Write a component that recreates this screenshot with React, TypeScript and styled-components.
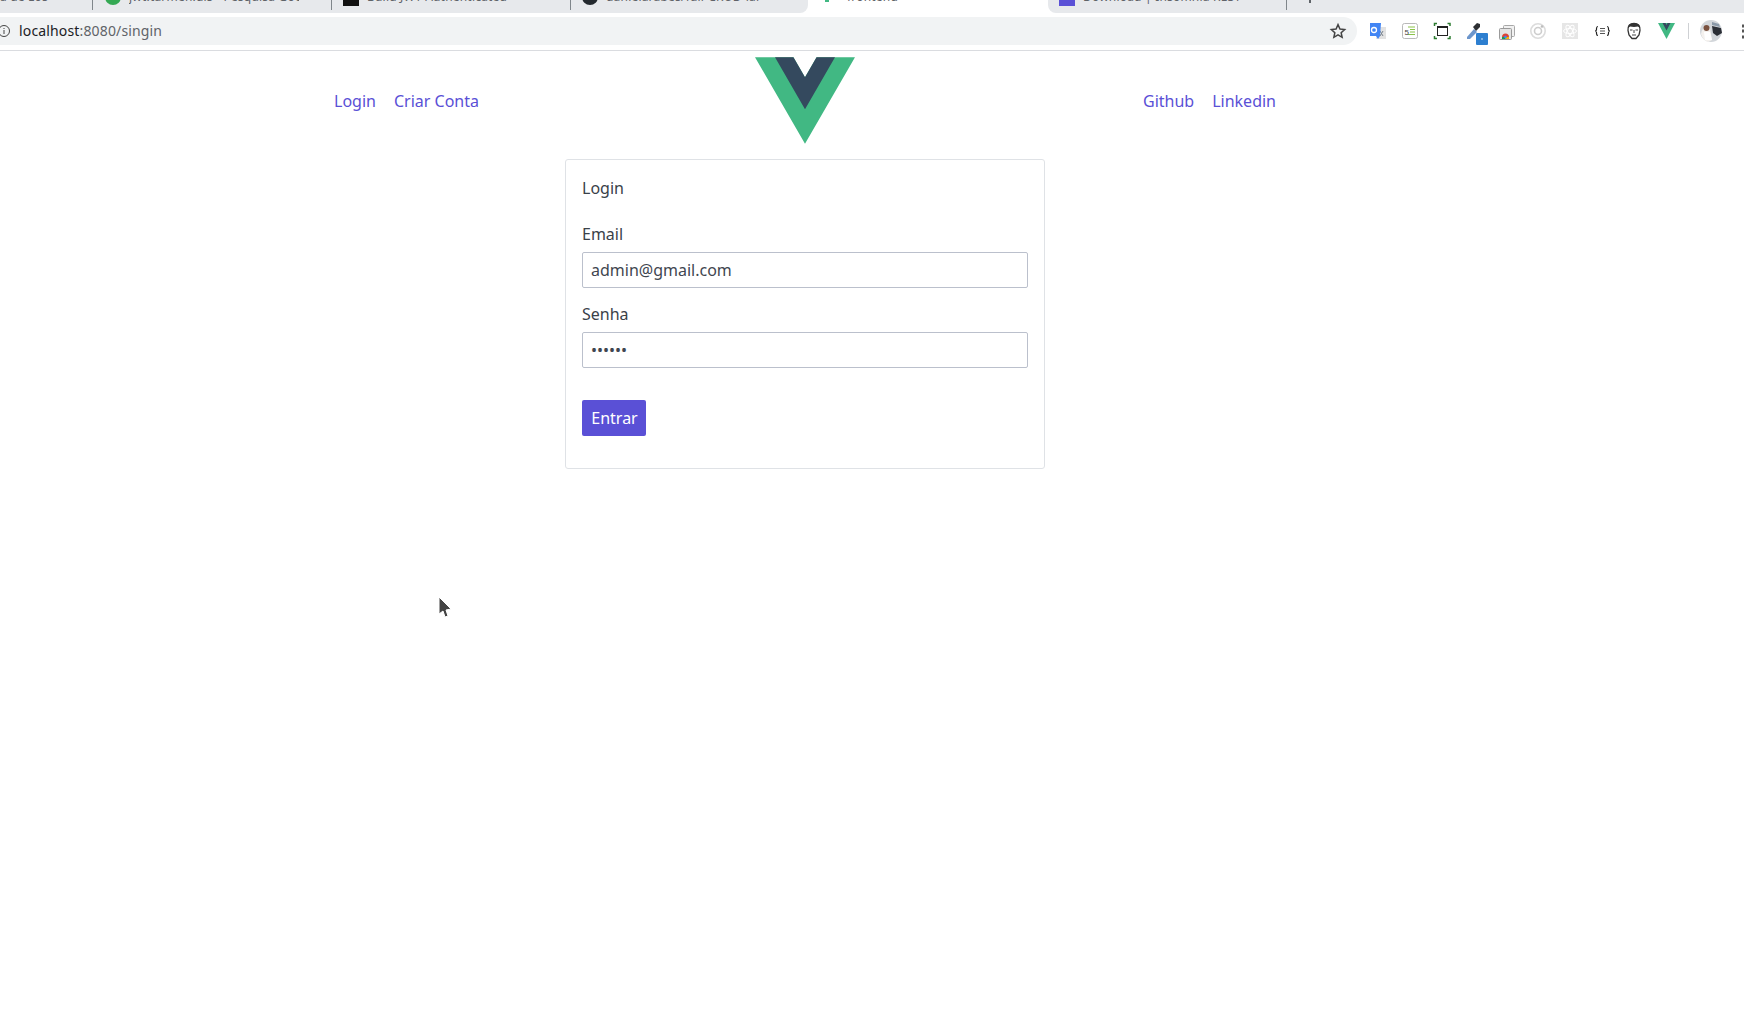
import styled, { createGlobalStyle } from "styled-components";

const Global = createGlobalStyle`
  html, body {
    margin: 0;
    padding: 0;
    background: #fff;
  }
  * {
    box-sizing: border-box;
  }
  body {
    font-family: "Noto Sans", sans-serif;
    font-size: 16px;
    line-height: 24px;
    color: #3a4149;
  }
`

const Page = styled.div`
  width: 1744px;
  height: 1028px;
  overflow: hidden;
  position: relative;
`

const TabStrip = styled.div`
  height: 13px;
  background: #fff;
  display: flex;
  overflow: hidden;
`

const Tab = styled.div<{ $w: number; $active?: boolean; $pad?: number; $round?: "l" | "r" }>`
  width: ${(p) => p.$w}px;
  height: 13px;
  flex: none;
  display: flex;
  align-items: flex-start;
  gap: 8px;
  padding-left: ${(p) => p.$pad ?? 11}px;
  font-size: 12px;
  line-height: 14px;
  white-space: nowrap;
  overflow: hidden;
  color: #5f6368;
  background: ${(p) => (p.$active ? "#fff" : "#e7e9ec")};
  border-bottom-left-radius: ${(p) => (p.$round === "l" ? 8 : 0)}px;
  border-bottom-right-radius: ${(p) => (p.$round === "r" ? 8 : 0)}px;
`

const TabRest = styled(Tab)`
  flex: 1;
  padding-left: 22px;
`

const TabIcon = styled.span<{ $c: string; $round?: boolean }>`
  width: 16px;
  height: 16px;
  margin-top: ${(p) => (p.$round ? -11 : -10)}px;
  flex: none;
  background: ${(p) => p.$c};
  border-radius: ${(p) => (p.$round ? "50%" : "0")};
`

const TabMark = styled.span`
  width: 4px;
  height: 2px;
  flex: none;
  margin-left: 4px;
  margin-right: 10px;
  background: #41b883;
`

const TabText = styled.span`
  margin-top: -10px;
  letter-spacing: 0.2px;
  overflow: hidden;
  max-width: 170px;
`

const TabSep = styled.span`
  width: 1px;
  height: 10px;
  flex: none;
  margin-left: auto;
  background: #80868b;
`

const PlusMark = styled.span`
  width: 2px;
  height: 3px;
  background: #5f6368;
`

const Toolbar = styled.div`
  height: 38px;
  background: #fff;
  border-bottom: 1px solid #dadce0;
  display: flex;
  align-items: flex-start;
  padding-top: 4px;
`

const UrlBar = styled.div`
  width: 1357px;
  height: 28px;
  background: #f1f3f4;
  border-radius: 0 14px 14px 0;
  display: flex;
  align-items: center;
  padding-right: 10px;
  font-size: 14px;
  letter-spacing: 0.15px;
  color: #202124;
`

const InfoIcon = styled.svg`
  width: 14px;
  height: 14px;
  margin-left: -3px;
  margin-right: 8px;
  flex: none;
`

const UrlRest = styled.span`
  color: #5f6368;
`

const Star = styled.svg`
  margin-left: auto;
  width: 18px;
  height: 18px;
`

const Extensions = styled.div`
  display: flex;
  align-items: center;
  height: 28px;
`

const Nav = styled.div`
  width: 1610px;
  height: 94px;
  display: flex;
  align-items: flex-start;
  justify-content: center;
  padding-top: 6px;
`

const NavGroup = styled.div`
  width: 437px;
  height: 87px;
  display: flex;
  align-items: center;
  gap: 18px;
  padding-left: 16px;
`

const NavGroupRight = styled(NavGroup)`
  justify-content: flex-end;
  padding-left: 0;
  padding-right: 16px;
`

const NavLink = styled.a`
  color: #5a50d6;
  text-decoration: none;
`

const Logo = styled.svg`
  width: 100px;
  height: 87px;
  flex: none;
`

const Main = styled.div`
  width: 1610px;
  display: flex;
  justify-content: center;
  padding-top: 14px;
`

const Card = styled.form`
  width: 480px;
  height: 310px;
  border: 1px solid #dfe2e6;
  border-radius: 3px;
  padding: 16px;
`

const CardTitle = styled.div`
  height: 24px;
  margin-bottom: 22px;
`

const Label = styled.label`
  display: block;
  margin-bottom: 6px;
  height: 24px;
`

const Input = styled.input`
  display: block;
  width: 100%;
  height: 36px;
  border: 1px solid #bbc0cc;
  border-radius: 2px;
  padding: 0 8px;
  margin-bottom: 14px;
  font-family: "Noto Sans", sans-serif;
  font-size: 16px;
  color: #3f4650;
  outline: none;
`

const Submit = styled.button`
  display: block;
  margin-top: 32px;
  width: 64px;
  height: 36px;
  border: none;
  border-radius: 2px;
  background: #5a50d6;
  color: #fff;
  font-family: "Noto Sans", sans-serif;
  font-size: 16px;
  padding: 0 0 0 1px;
`

const Cursor = styled.svg`
  position: absolute;
  left: 438px;
  top: 596px;
  width: 14px;
  height: 22px;
`

function ExtIcons() {
  return (
    <Extensions>
      <svg width="387" height="28" viewBox="0 0 387 28">
        {/* translate */}
        <path d="M21 10h8v12h-10z" fill="#e2e2e2" />
        <path d="M23 14l3 5M26 14l-3 5" stroke="#78828c" />
        <path d="M13 6h11l-1 13-2 3-2-3h-6z" fill="#4285f4" />
        <circle cx="17" cy="13" r="2.500" fill="none" stroke="#fff" strokeWidth="1.300" />
        {/* snippet */}
        <rect x="45.500" y="6.500" width="15" height="15" rx="2" fill="#fff" stroke="#b9b9b9" />
        <path d="M51 10h7M53 12.500h5M53 15h5M51 17.500h7" stroke="#8bc34a" />
        <text x="47.500" y="18" fontFamily="Liberation Sans" fontSize="8" fill="#444">5</text>
        {/* capture */}
        <path d="M77.500 9V6.500H80M90.500 6.500H93V9M93 19v2.500h-2.500M80 21.500h-2.500V19" fill="none" stroke="#2e7d32" strokeWidth="1.500" />
        <rect x="80.500" y="9.500" width="10" height="9" fill="none" stroke="#222" />
        <path d="M80 9h11v2H80z" fill="#222" />
        {/* dropper */}
        <path d="M110 20l7-8 3 3-7 7-3 0z" fill="#6c96cc" />
        <path d="M116 10l4-4 3 1 0 3-4 4z" fill="#2d2f33" />
        <rect x="119" y="16" width="12" height="12" rx="1" fill="#2d7fd0" />
        <rect x="124" y="21.500" width="2" height="1" fill="#cfe3f6" />
        {/* chrome apps */}
        <rect x="146.500" y="8.500" width="11" height="11" rx="1" fill="#f1f1f1" stroke="#a8a8a8" />
        <rect x="142.500" y="11.500" width="12" height="11" rx="1" fill="#e4e4e4" stroke="#9a9a9a" />
        <path d="M145 20a3.500 3.500 0 0 1 7 0z" fill="#db4437" />
        <path d="M148.500 20v2h3.500v-2z" fill="#f4b400" />
        <path d="M145 20v2h3.500v-2z" fill="#0f9d58" />
        <circle cx="148.500" cy="20" r="1.300" fill="#4285f4" />
        {/* ring */}
        <circle cx="181" cy="14" r="7.200" fill="none" stroke="#dcdcdc" strokeWidth="1.600" />
        <circle cx="181" cy="14" r="3.500" fill="none" stroke="#cdcdcd" strokeWidth="1.600" />
        <circle cx="185" cy="9.500" r="1.300" fill="#bdbdbd" />
        {/* react */}
        <rect x="205" y="6" width="16" height="16" fill="#e6e6e6" />
        <ellipse cx="213" cy="14" rx="6.500" ry="2.500" fill="none" stroke="#fff" />
        <ellipse cx="213" cy="14" rx="6.500" ry="2.500" fill="none" stroke="#fff" transform="rotate(60 213 14)" />
        <ellipse cx="213" cy="14" rx="6.500" ry="2.500" fill="none" stroke="#fff" transform="rotate(120 213 14)" />
        {/* json */}
        <path d="M241 9.500c-1.500 0-1.500 1-1.500 2v1c0 1-.5 1.500-1.500 1.500 1 0 1.500.5 1.500 1.500v1c0 1 0 2 1.500 2M250 9.500c1.500 0 1.500 1 1.500 2v1c0 1 .5 1.500 1.500 1.500-1 0-1.500.5-1.500 1.500v1c0 1 0 2-1.500 2" fill="none" stroke="#222" strokeWidth="1.200" />
        <path d="M243 11.500h5M243 14h5M243 16.500h5" stroke="#555" />
        {/* face */}
        <path d="M277 6.500c4.500 0 6.500 3 6 7l-1 4.500-3 3.500h-4l-3-3.500-1-4.500c-.5-4 1.500-7 6-7z" fill="#fff" stroke="#333" strokeWidth="1.300" />
        <path d="M271 11l1-3.500 5-1.500 5 1.500 1 3.500-2-1.500-4 .5-4-.5z" fill="#333" />
        <path d="M273 13h2.500M278.500 13h2.500M277 13v3M275 18h4" stroke="#444" />
        {/* vue */}
        <path d="M301 6h17l-8.500 16z" fill="#41b883" />
        <path d="M305.500 6h3l1 2 1-2h3l-4 7.500z" fill="#35495e" />
        {/* divider */}
        <path d="M331.500 6v16" stroke="#cfd1d4" />
        {/* avatar */}
        <circle cx="354" cy="14" r="11" fill="#d2d6da" />
        <path d="M344 17c1-4 2-6 4-7l5 1 2 12-4 2c-3-1-6-4-7-8z" fill="#f4f1ee" />
        <circle cx="349.500" cy="11" r="3" fill="#7a5240" />
        <path d="M347 15h6l2 8h-7z" fill="#fff" />
        <path d="M355 9l9 2 1 5-5 3-4-3z" fill="#2b2f36" />
        <path d="M355 5l7 2 1 3-8-2z" fill="#8a99a8" />
        {/* menu */}
        <rect x="385" y="7.500" width="2" height="3" fill="#555" />
        <rect x="385" y="12.500" width="2" height="3" fill="#555" />
        <rect x="385" y="18.500" width="2" height="3" fill="#555" />
      </svg>
    </Extensions>
  )
}

export default function App() {
  return (
    <Page>
      <Global />
      <TabStrip>
        <Tab $w={93} $pad={0}><TabText>a de Los</TabText><TabSep /></Tab>
        <Tab $w={239} $pad={12}><TabIcon $c="#34a853" $round /><TabText>jwt.tarmen.dis - Pesquisa Goo</TabText><TabSep /></Tab>
        <Tab $w={239}><TabIcon $c="#111" /><TabText>Build JWT Authenticated</TabText><TabSep /></Tab>
        <Tab $w={237} $round="r"><TabIcon $c="#24292e" $round /><TabText>danielarabes/full-CRUD-lar</TabText></Tab>
        <Tab $w={240} $active $pad={13}><TabMark /><TabText>frontend</TabText></Tab>
        <Tab $w={239} $round="l"><TabIcon $c="#5a50d6" /><TabText>Download | Insomnia REST</TabText><TabSep /></Tab>
        <TabRest $w={0}><PlusMark /></TabRest>
      </TabStrip>
      <Toolbar>
        <UrlBar>
          <InfoIcon viewBox="0 0 14 14">
            <circle cx="7" cy="7" r="5.500" fill="none" stroke="#444" />
            <path d="M7 6v4M7 4v1" stroke="#444" />
          </InfoIcon>
          localhost<UrlRest>:8080/singin</UrlRest>
          <Star viewBox="0 0 24 24">
            <path d="M12 3.500l2.600 5.800 6.300.7-4.700 4.200 1.300 6.200-5.500-3.200-5.500 3.200 1.300-6.200-4.700-4.200 6.300-.7z" fill="none" stroke="#444" strokeWidth="2" />
          </Star>
        </UrlBar>
        <ExtIcons />
      </Toolbar>
      <Nav>
        <NavGroup>
          <NavLink href="#">Login</NavLink>
          <NavLink href="#">Criar Conta</NavLink>
        </NavGroup>
        <Logo viewBox="0 0 261.760 226.690">
          <path d="M161.096.001l-30.225 52.351L100.647.001H-.005l130.877 226.688L261.749.001z" fill="#41b883" />
          <path d="M161.096.001l-30.225 52.351L100.647.001H52.346l78.526 136.01L209.398.001z" fill="#34495e" />
        </Logo>
        <NavGroupRight>
          <NavLink href="#">Github</NavLink>
          <NavLink href="#">Linkedin</NavLink>
        </NavGroupRight>
      </Nav>
      <Main>
        <Card>
          <CardTitle>Login</CardTitle>
          <Label>Email</Label>
          <Input type="text" defaultValue="admin@gmail.com" />
          <Label>Senha</Label>
          <Input type="password" defaultValue="123456" />
          <Submit type="button">Entrar</Submit>
        </Card>
      </Main>
      <Cursor viewBox="0 0 14 22">
        <path d="M1 1l12 12-5 1 2 6-3 1-2-6-4 3z" fill="#444" stroke="#fff" />
      </Cursor>
    </Page>
  )
}
